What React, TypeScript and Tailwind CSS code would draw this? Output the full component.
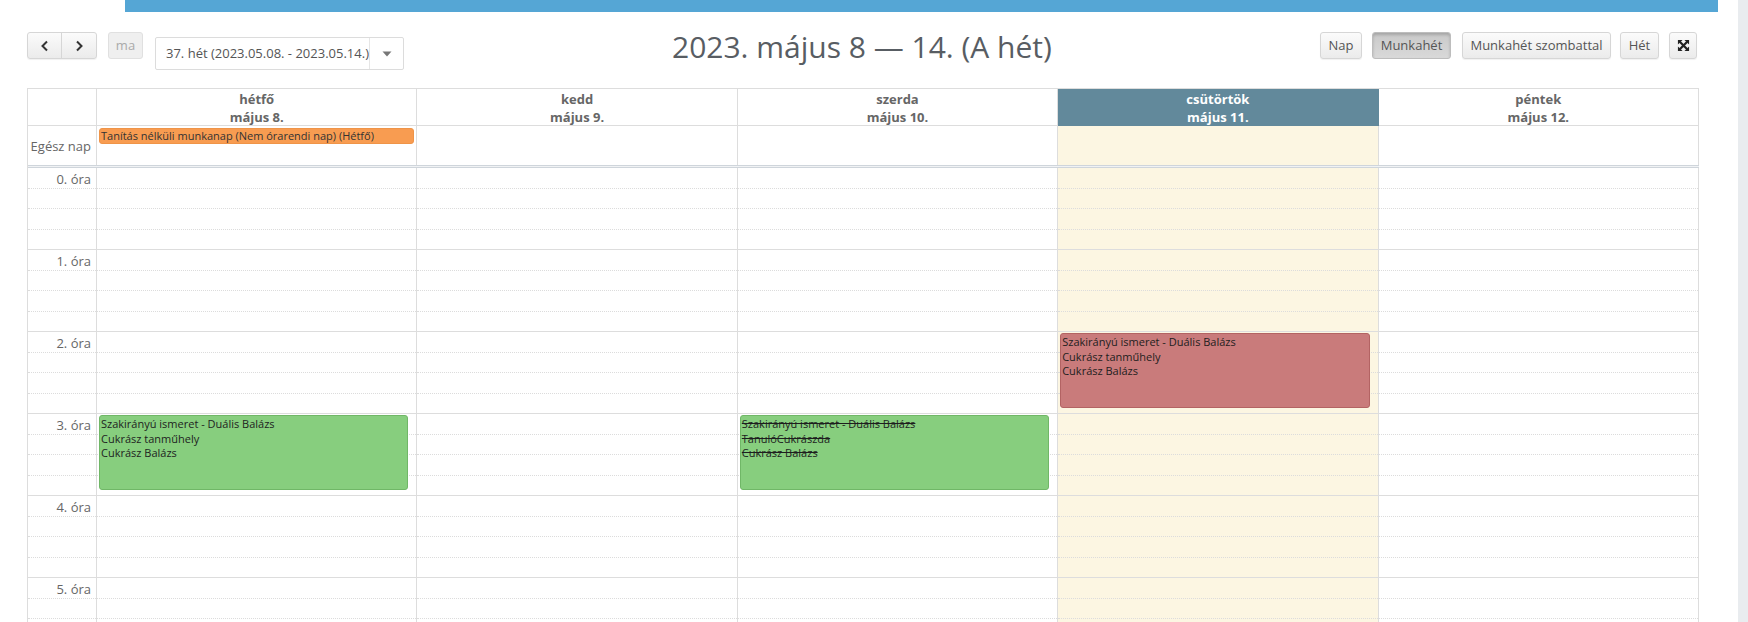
import React from "react";

const HOURS = [0, 1, 2, 3, 4, 5, 6, 7];

type Ev = { hour: number; lines: string[]; kind: "green" | "red"; strike?: boolean };

const days: { name: string; date: string; today?: boolean; events: Ev[]; allDay?: string }[] = [
  {
    name: "hétfő",
    date: "május 8.",
    allDay: "Tanítás nélküli munkanap (Nem órarendi nap) (Hétfő)",
    events: [
      { hour: 3, kind: "green", lines: ["Szakirányú ismeret - Duális Balázs", "Cukrász tanműhely", "Cukrász Balázs"] },
    ],
  },
  { name: "kedd", date: "május 9.", events: [] },
  {
    name: "szerda",
    date: "május 10.",
    events: [
      {
        hour: 3,
        kind: "green",
        strike: true,
        lines: ["Szakirányú ismeret - Duális Balázs", "TanulóCukrászda", "Cukrász Balázs"],
      },
    ],
  },
  {
    name: "csütörtök",
    date: "május 11.",
    today: true,
    events: [
      { hour: 2, kind: "red", lines: ["Szakirányú ismeret - Duális Balázs", "Cukrász tanműhely", "Cukrász Balázs"] },
    ],
  },
  { name: "péntek", date: "május 12.", events: [] },
];

function Slots({ label }: { label?: string }) {
  return (
    <div className="h-[82px] flex flex-col">
      <div className="h-[20.5px] border-b border-dotted border-[#dcdcdc] flex justify-end pr-[5px] text-[13px] leading-[22px] text-[#666] whitespace-nowrap">
        {label}
      </div>
      <div className="h-[20.5px] border-b border-dotted border-[#dcdcdc]" />
      <div className="h-[20.5px] border-b border-dotted border-[#dcdcdc]" />
      <div className="h-[20.5px] border-b border-[#dddddd]" />
    </div>
  );
}

function Btn({ children, active, className = "" }: { children: React.ReactNode; active?: boolean; className?: string }) {
  return (
    <div
      className={
        "h-[27px] flex items-center justify-center text-[13px] whitespace-nowrap rounded-[3px] border " +
        (active
          ? "bg-gradient-to-b from-[#c9c9c9] to-[#d9d9d9] border-[#bdbdbd] text-[#555] shadow-[inset_0_2px_3px_rgba(0,0,0,0.18)] "
          : "bg-gradient-to-b from-[#fbfbfb] to-[#ebebeb] border-[#d6d6d6] text-[#555] shadow-[0_1px_1px_rgba(0,0,0,0.06)] ") +
        className
      }
    >
      {children}
    </div>
  );
}

export default function App() {
  return (
    <div className="w-[1748px] h-[622px] overflow-hidden flex bg-white font-['Open_Sans',sans-serif]">
      <div className="w-[1738px] shrink-0">
        <div className="ml-[125px] w-[1593px] h-[12px] bg-[#55a6d5]" />
        <div className="pl-[27px] w-[1699px]">
          {/* toolbar */}
          <div className="flex items-start h-[58px]">
            <div className="flex mt-[20px] h-[27px] rounded-[3px] border border-[#d6d6d6] bg-gradient-to-b from-[#fbfbfb] to-[#ebebeb] shadow-[0_1px_1px_rgba(0,0,0,0.06)]">
              <div className="w-[34px] flex items-center justify-center border-r border-[#d6d6d6]">
                <svg width="10" height="12" viewBox="0 0 10 12">
                  <path d="M7 1.5 L2.5 6 L7 10.5" fill="none" stroke="#333" strokeWidth="2" />
                </svg>
              </div>
              <div className="w-[34px] flex items-center justify-center">
                <svg width="10" height="12" viewBox="0 0 10 12">
                  <path d="M3 1.5 L7.5 6 L3 10.5" fill="none" stroke="#333" strokeWidth="2" />
                </svg>
              </div>
            </div>
            <div className="mt-[20px] ml-[11px] w-[35px] h-[27px] flex items-center justify-center rounded-[3px] border border-[#e0e0e0] bg-[#efefef] text-[13px] text-[#aaa]">
              ma
            </div>
            <div className="mt-[25px] ml-[12px] w-[249px] h-[33px] flex items-center border border-[#dcdcdc] rounded-[2px] bg-white">
              <div className="flex-1 pl-[10px] text-[13px] text-[#555] whitespace-nowrap">37. hét (2023.05.08. - 2023.05.14.)</div>
              <div className="w-[34px] h-full border-l border-[#e6e6e6] flex items-center justify-center">
                <svg width="10" height="6" viewBox="0 0 10 6">
                  <path d="M0.5 0.5 L9.5 0.5 L5 5.5 Z" fill="#777" />
                </svg>
              </div>
            </div>
            <div className="ml-[268px] mt-[15px] text-[30px] leading-[40px] text-[#585d63] whitespace-nowrap">
              2023. május 8 — 14. (A hét)
            </div>
            <div className="ml-auto mr-[2px] mt-[20px] flex">
              <Btn className="w-[42px]">Nap</Btn>
              <Btn active className="ml-[10px] w-[79px]">Munkahét</Btn>
              <Btn className="ml-[11px] w-[149px]">Munkahét szombattal</Btn>
              <Btn className="ml-[9px] w-[39px]">Hét</Btn>
              <Btn className="ml-[10px] w-[28px]">
                <svg width="13" height="13" viewBox="0 0 14 14">
                  <path d="M1 1 L6 1 L1 6 Z M13 1 L8 1 L13 6 Z M1 13 L1 8 L6 13 Z M13 13 L8 13 L13 8 Z" fill="#222" />
                  <path d="M3 3 L11 11 M11 3 L3 11" stroke="#222" strokeWidth="2.4" />
                </svg>
              </Btn>
            </div>
          </div>

          {/* calendar table */}
          <div className="mt-[18px] w-[1672px] border-t border-l border-[#dddddd]">
            {/* header */}
            <div className="grid grid-cols-[69px_repeat(5,minmax(0,1fr))]">
              <div className="h-[37px] border-r border-b border-[#dddddd]" />
              {days.map((d) => (
                <div
                  key={d.name}
                  className={
                    "h-[37px] border-r border-b text-center font-bold text-[13px] leading-[18px] pt-[1px] " +
                    (d.today ? "bg-[#62899b] text-white border-[#62899b]" : "text-[#666] border-[#dddddd]")
                  }
                >
                  <div>{d.name}</div>
                  <div>{d.date}</div>
                </div>
              ))}
            </div>
            {/* all day */}
            <div className="grid grid-cols-[69px_repeat(5,minmax(0,1fr))]">
              <div className="h-[39px] border-r border-[#dddddd] flex items-center justify-end pr-[5px] pt-[3px] text-[13px] text-[#666] whitespace-nowrap">
                Egész nap
              </div>
              {days.map((d) => (
                <div key={d.name} className={"h-[39px] border-r border-[#dddddd] " + (d.today ? "bg-[#fcf6e2]" : "")}>
                  {d.allDay && (
                    <div className="mt-[2px] ml-[2px] mr-[2px] h-[16px] rounded-[3px] bg-[#f89c51] border border-[#ef9448] px-[1px] text-[11px] leading-[14px] text-[#333] whitespace-nowrap overflow-hidden">
                      {d.allDay}
                    </div>
                  )}
                </div>
              ))}
            </div>
            {/* divider */}
            <div className="h-[3px] border-t border-b border-[#cfd5db] bg-[#f0f2f4]" />
            {/* body */}
            <div className="grid grid-cols-[69px_repeat(5,minmax(0,1fr))]">
              <div className="border-r border-[#dddddd]">
                {HOURS.map((h) => (
                  <Slots key={h} label={`${h}. óra`} />
                ))}
              </div>
              {days.map((d) => (
                <div key={d.name} className={"relative border-r border-[#dddddd] " + (d.today ? "bg-[#fcf6e2]" : "")}>
                  {HOURS.map((h) => (
                    <Slots key={h} />
                  ))}
                  {d.events.map((e, i) => (
                    <div
                      key={i}
                      className={
                        "absolute left-[2px] right-[8px] h-[75px] rounded-[3px] border px-[1px] pt-[1px] text-[11px] leading-[14.6px] text-[#1e1e1e] whitespace-nowrap overflow-hidden " +
                        (e.kind === "green" ? "bg-[#87ce7e] border-[#70b767]" : "bg-[#c97b7b] border-[#b36363]") +
                        (e.strike ? " line-through" : "")
                      }
                      style={{ top: e.hour * 82 + 1 }}
                    >
                      {e.lines.map((l) => (
                        <div key={l}>{l}</div>
                      ))}
                    </div>
                  ))}
                </div>
              ))}
            </div>
          </div>
        </div>
      </div>
      <div className="w-[10px] shrink-0 bg-[#e9ecef]" />
    </div>
  );
}
